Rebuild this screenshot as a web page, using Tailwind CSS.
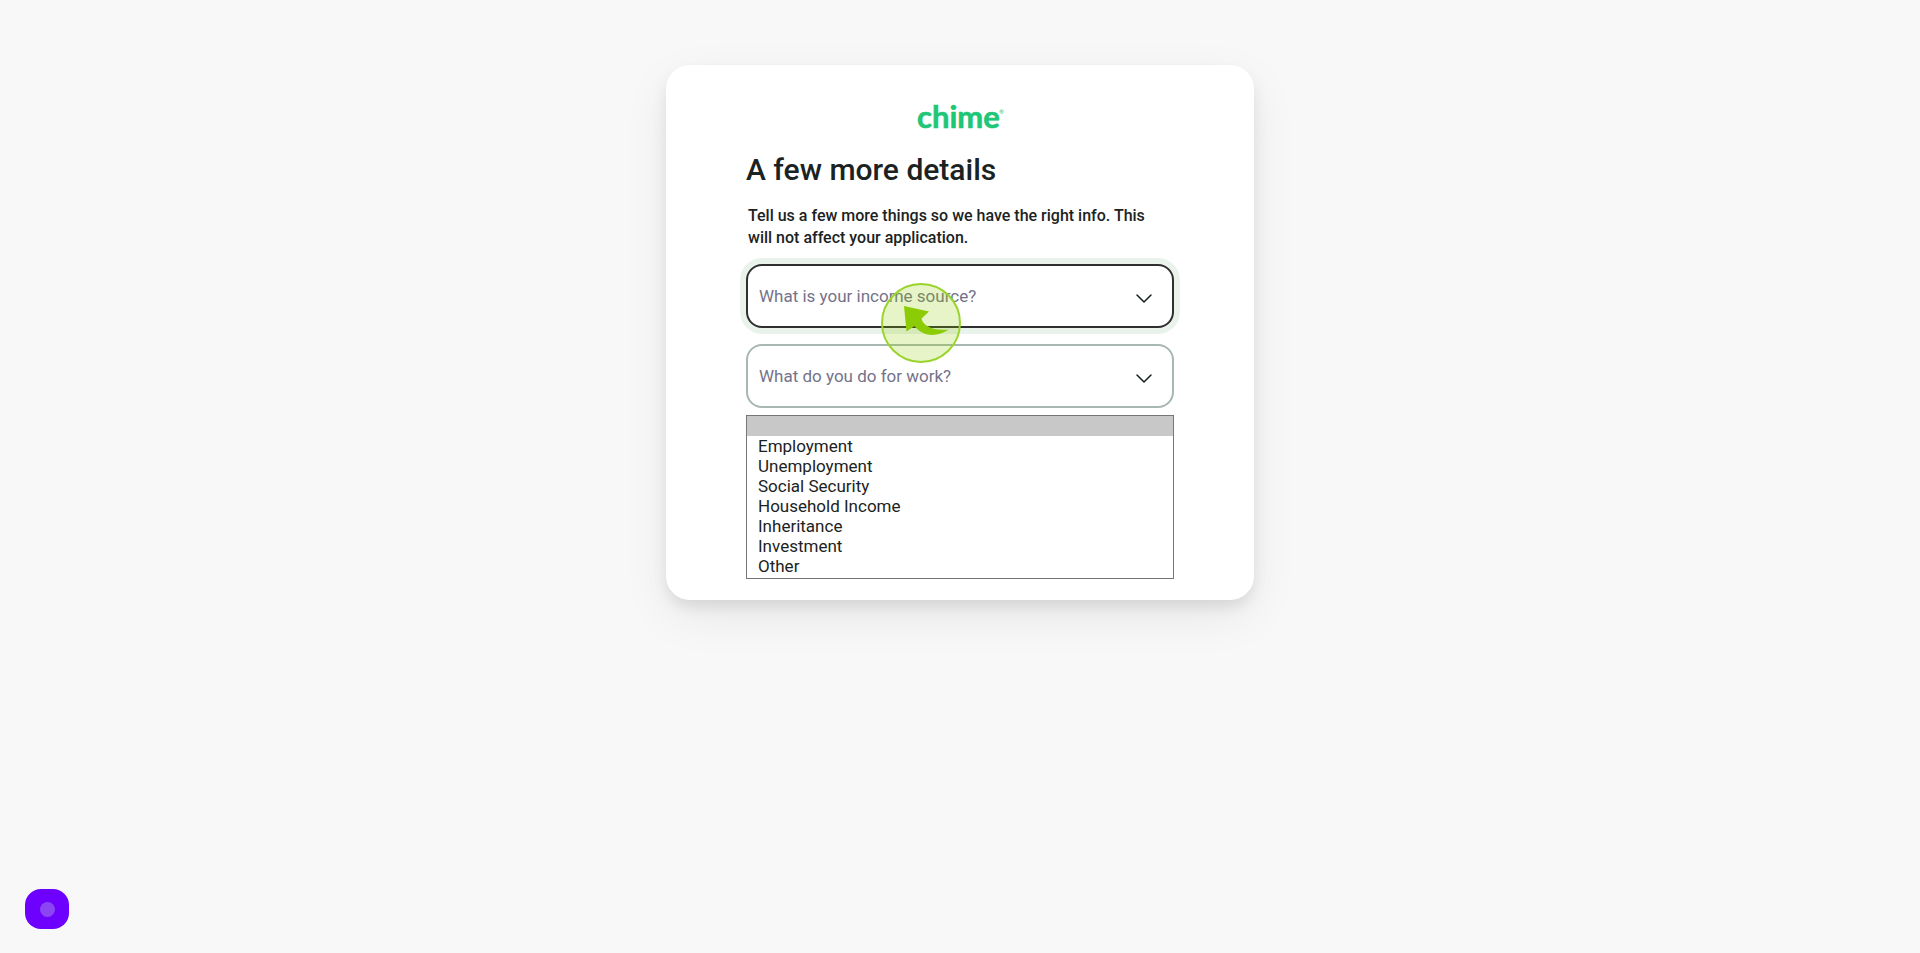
<!DOCTYPE html>
<html lang="en">
<head>
    <meta charset="UTF-8">
    <meta name="viewport" content="width=device-width, initial-scale=1.0">
    <title>Chime - A few more details</title>
    <script src="https://cdn.jsdelivr.net/npm/@tailwindcss/browser@4"></script>
</head>
<body class="min-h-screen bg-[#f8f8f8] font-[Roboto,sans-serif] text-[#1b2322]">
    <!-- Card -->
    <main class="mx-auto mt-[65px] max-w-[588px] rounded-3xl bg-white px-20 pt-8 pb-[21px] shadow-[0_8px_16px_-2px_rgba(0,0,0,0.1),0_16px_48px_rgba(0,0,0,0.07)]">
        <!-- Logo -->
        <div class="flex justify-center">
            <svg class="h-10 w-24" viewBox="0 -4 96 40" role="img" aria-label="Chime">
                <text x="5" y="27" font-family="Lato, sans-serif" font-size="31" font-weight="700" fill="#1ec677" stroke="#1ec677" stroke-width="0.6">chime</text>
                <text x="87" y="13" font-family="Lato, sans-serif" font-size="6" fill="#1ec677">®</text>
            </svg>
        </div>

        <h1 class="mt-[13px] text-[30px] leading-10 font-medium">A few more details</h1>
        <p class="mt-[15px] pr-4 pl-0.5 text-base leading-[22px] font-medium">Tell us a few more things so we have the right info. This will not affect your application.</p>

        <!-- Income source -->
        <div class="relative mt-[15px] grid items-center">
            <select id="income" class="col-start-1 row-start-1 h-16 w-full appearance-none rounded-2xl border-2 border-[#2f2f2f] bg-white px-3 text-base ring-6 ring-[#e9f3ec] outline-none">
                <option></option>
            </select>
            <label for="income" class="pointer-events-none col-start-1 row-start-1 px-[13px] text-[17px] leading-6 text-[#74728a]">What is your income source?</label>
            <svg class="pointer-events-none col-start-1 row-start-1 mr-5 h-5 w-5 justify-self-end" viewBox="0 0 20 20" fill="none" stroke="#12211e" stroke-width="1.5" stroke-linecap="round" stroke-linejoin="round">
                <path d="M3 9l7 7 7-7"/>
            </svg>
            <!-- Click marker -->
            <div class="pointer-events-none absolute top-[19px] left-[135px] z-10 h-20 w-20">
                <svg class="h-20 w-20" viewBox="0 0 80 80">
                    <circle cx="40" cy="40" r="39" fill="#8ccc00" fill-opacity="0.22" stroke="#9ad42b" stroke-width="2"/>
                    <path d="M23 23L48 28.500L40.500 35.500C42 43 52 48 68 46.500C56 54.500 42 54 33.500 43L25.500 48.500Z" fill="#8ccc06"/>
                </svg>
            </div>
        </div>

        <!-- Occupation -->
        <div class="mt-4 grid items-center">
            <select id="work" class="col-start-1 row-start-1 h-16 w-full appearance-none rounded-2xl border-2 border-[#a7b7b1] bg-white px-3 text-base outline-none">
                <option></option>
            </select>
            <label for="work" class="pointer-events-none col-start-1 row-start-1 px-[13px] text-[17px] leading-6 text-[#74728a]">What do you do for work?</label>
            <svg class="pointer-events-none col-start-1 row-start-1 mr-5 h-5 w-5 justify-self-end" viewBox="0 0 20 20" fill="none" stroke="#12211e" stroke-width="1.5" stroke-linecap="round" stroke-linejoin="round">
                <path d="M3 9l7 7 7-7"/>
            </svg>
        </div>

        <!-- Open list -->
        <select size="8" aria-label="Income source" class="mt-[7px] block h-[164px] w-full appearance-none overflow-hidden rounded-none border border-[#767676] bg-white text-[17px] outline-none">
            <option class="h-5 min-h-0 bg-[#c8c8c8]"></option>
            <option class="h-5 min-h-0 px-[11px] py-0 leading-[21px]">Employment</option>
            <option class="h-5 min-h-0 px-[11px] py-0 leading-[21px]">Unemployment</option>
            <option class="h-5 min-h-0 px-[11px] py-0 leading-[21px]">Social Security</option>
            <option class="h-5 min-h-0 px-[11px] py-0 leading-[21px]">Household Income</option>
            <option class="h-5 min-h-0 px-[11px] py-0 leading-[21px]">Inheritance</option>
            <option class="h-5 min-h-0 px-[11px] py-0 leading-[21px]">Investment</option>
            <option class="h-5 min-h-0 px-[11px] py-0 leading-[21px]">Other</option>
        </select>
    </main>

    <!-- Widget button -->
    <button type="button" aria-label="Open widget" class="fixed bottom-6 left-[25px] flex h-10 w-11 items-center justify-center rounded-2xl bg-[#6e00ff]">
        <span class="h-[15px] w-[15px] rounded-full bg-[#8b45f2]"></span>
    </button>
</body>
</html>
